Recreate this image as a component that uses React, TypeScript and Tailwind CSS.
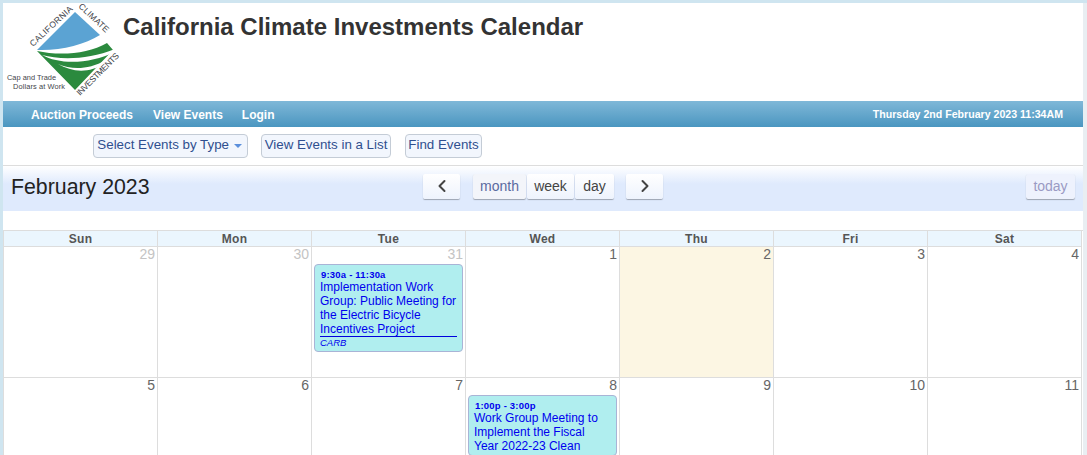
import React from "react";
import { ChevronLeft, ChevronRight } from "lucide-react";

const sans = "font-['Liberation_Sans',Arial,sans-serif]";

// coordinates in the viewBox are page pixels
const Logo = () => (
  <svg width="127" height="98" viewBox="3 3 127 98" className="block overflow-visible">
    <path d="M37 50 L75 12 L100 35 C84 45 60 51 37 50 Z" fill="#5ba3d3" />
    <path d="M37 51 C60 56 88 54 107 43 L113 50 L75 90 Z" fill="#2b8a3e" />
    <path d="M42 55 C60 60 88 60 115 49 L115 52 C90 64 60 65 42 55 Z" fill="#fff" />
    <path d="M58 64 C72 70 88 70 106 60 L106 63 C88 74 72 72 58 64 Z" fill="#fff" />
    <g fill="#3f444a" fontFamily="Liberation Sans, Arial, sans-serif" fontSize="8.6">
      <text transform="translate(33 47) rotate(-43)" textLength="55">CALIFORNIA</text>
      <text transform="translate(78 7) rotate(43)" textLength="38">CLIMATE</text>
      <text transform="translate(80 96) rotate(-45)" textLength="56">INVESTMENTS</text>
    </g>
    <g fill="#3f444a" fontFamily="Liberation Sans, Arial, sans-serif" fontSize="7.4">
      <text x="7" y="80" textLength="49">Cap and Trade</text>
      <text x="13" y="89" textLength="52">Dollars at Work</text>
    </g>
  </svg>
);

const Pill = ({ children, className = "" }: { children: React.ReactNode; className?: string }) => (
  <button className={`h-6 whitespace-nowrap rounded border border-[#c4ccd6] bg-[#f2f6fd] pb-[2px] text-center text-[13.33px] leading-none text-[#2f4f8f] ${className}`}>
    {children}
  </button>
);

const NavButton = ({ children, className = "" }: { children: React.ReactNode; className?: string }) => (
  <button className={`flex h-[25px] items-center justify-center rounded-[2px] text-[14px] shadow-[0_1px_1px_rgba(0,0,0,0.3)] ${className}`}>
    {children}
  </button>
);

const plainBtn = "bg-gradient-to-b from-white to-[#eef3fd] text-[#444]";

type Ev = { time: string; title: string[]; org?: string };

const EventCard = ({ ev }: { ev: Ev }) => (
  <div className="mx-[2px] mt-[3px] rounded border border-[#a9b4d6] bg-[#b0eeef] pb-[2px] pl-[5px] pr-[5px] pt-[4px] text-[#0000ee]">
    <div className="pl-[1px] text-[9.5px] font-bold leading-[11px] tracking-[0.2px]">{ev.time}</div>
    <div className={`text-[12px] leading-[14px] ${ev.org ? "border-b border-[#0000dd]" : ""}`}>
      {ev.title.map((l) => (
        <div key={l}>{l}</div>
      ))}
    </div>
    {ev.org && <div className="text-[9.5px] italic leading-[12px]">{ev.org}</div>}
  </div>
);

const Cell = ({ n, muted, today, ev }: { n: number; muted?: boolean; today?: boolean; ev?: Ev }) => (
  <div className={`h-[131px] min-w-0 overflow-hidden border-b border-r border-[#ddd] ${today ? "bg-[#fcf6e3]" : "bg-white"}`}>
    <div className={`h-[14px] pr-[2px] text-right text-[14px] leading-[14px] ${muted ? "text-[#c4c4c4]" : "text-[#666]"}`}>{n}</div>
    {ev && <EventCard ev={ev} />}
  </div>
);

const DAYS = ["Sun", "Mon", "Tue", "Wed", "Thu", "Fri", "Sat"];

const bike: Ev = {
  time: "9:30a - 11:30a",
  title: ["Implementation Work", "Group: Public Meeting for", "the Electric Bicycle", "Incentives Project"],
  org: "CARB",
};
const fiscal: Ev = {
  time: "1:00p - 3:00p",
  title: ["Work Group Meeting to", "Implement the Fiscal", "Year 2022-23 Clean"],
};

export default function App() {
  return (
    <div className={`flex h-[455px] w-[1087px] overflow-hidden bg-[#cfe5f0] pl-[3px] pt-[3px] ${sans}`}>
      <div className="h-full w-[1080px] bg-white">
        <header className="flex h-[98px] bg-white">
          <div className="w-[120px]">
            <Logo />
          </div>
          <h1 className="pt-[10px] text-[24px] font-bold leading-[28px] text-[#333]">California Climate Investments Calendar</h1>
        </header>

        <nav className="flex h-[26px] items-center justify-between bg-gradient-to-b from-[#7fb8d8] to-[#4a96c0] pl-[28px] pr-[20px] pt-[2px] text-white">
          <div className="flex gap-5 text-[12px] font-bold">
            <span>Auction Proceeds</span>
            <span>View Events</span>
            <span className="-ml-[1px]">Login</span>
          </div>
          <span className="text-[10.6px] font-bold">Thursday 2nd February 2023 11:34AM</span>
        </nav>

        <div className="flex h-[38px] items-center pl-[90px]">
          <Pill className="w-[155px] pr-[2px]">
            Select Events by Type <span className="ml-[1px] inline-block h-0 w-0 border-x-[4px] border-t-[4px] border-x-transparent border-t-[#5b8fdc] align-middle" />
          </Pill>
          <Pill className="ml-[13px] w-[130px]">View Events in a List</Pill>
          <Pill className="ml-[14px] w-[77px]">Find Events</Pill>
        </div>

        <div className="flex h-[46px] items-center border-t border-[#ddd] bg-[linear-gradient(#fff_0%,#dfeafd_40%,#dfeafd_100%)] pb-[5px] pl-[8px] pr-[8px]">
          <h2 className="w-[412px] pt-[2px] text-[21.3px] leading-6 text-[#222]">February 2023</h2>
          <NavButton className={`w-[37px] ${plainBtn}`}>
            <ChevronLeft size={20} strokeWidth={2.4} />
          </NavButton>
          <div className="ml-[13px] flex gap-[1px]">
            <NavButton className="w-[53px] bg-[#f3f5fa] text-[#5a6aa0]">month</NavButton>
            <NavButton className={`w-[47px] ${plainBtn}`}>week</NavButton>
            <NavButton className={`w-[39px] ${plainBtn}`}>day</NavButton>
          </div>
          <NavButton className={`ml-[12px] w-[37px] ${plainBtn}`}>
            <ChevronRight size={20} strokeWidth={2.4} />
          </NavButton>
          <NavButton className="ml-auto w-[49px] bg-[#eef2fd] text-[#9a9ac4]">today</NavButton>
        </div>

        <div className="h-[19px]" />

        <div className="grid grid-cols-[repeat(7,154px)] border-l border-t border-[#ddd]">
          {DAYS.map((d) => (
            <div key={d} className="h-[16px] border-b border-r border-[#ddd] bg-[#ebf6fe] text-center text-[12px] font-bold leading-[16px] tracking-[0.3px] text-[#555]">
              {d}
            </div>
          ))}
          <Cell n={29} muted />
          <Cell n={30} muted />
          <Cell n={31} muted ev={bike} />
          <Cell n={1} />
          <Cell n={2} today />
          <Cell n={3} />
          <Cell n={4} />
          <Cell n={5} />
          <Cell n={6} />
          <Cell n={7} />
          <Cell n={8} ev={fiscal} />
          <Cell n={9} />
          <Cell n={10} />
          <Cell n={11} />
        </div>
      </div>
      <div className="h-full w-[4px] bg-[#e9eef2]" />
    </div>
  );
}
